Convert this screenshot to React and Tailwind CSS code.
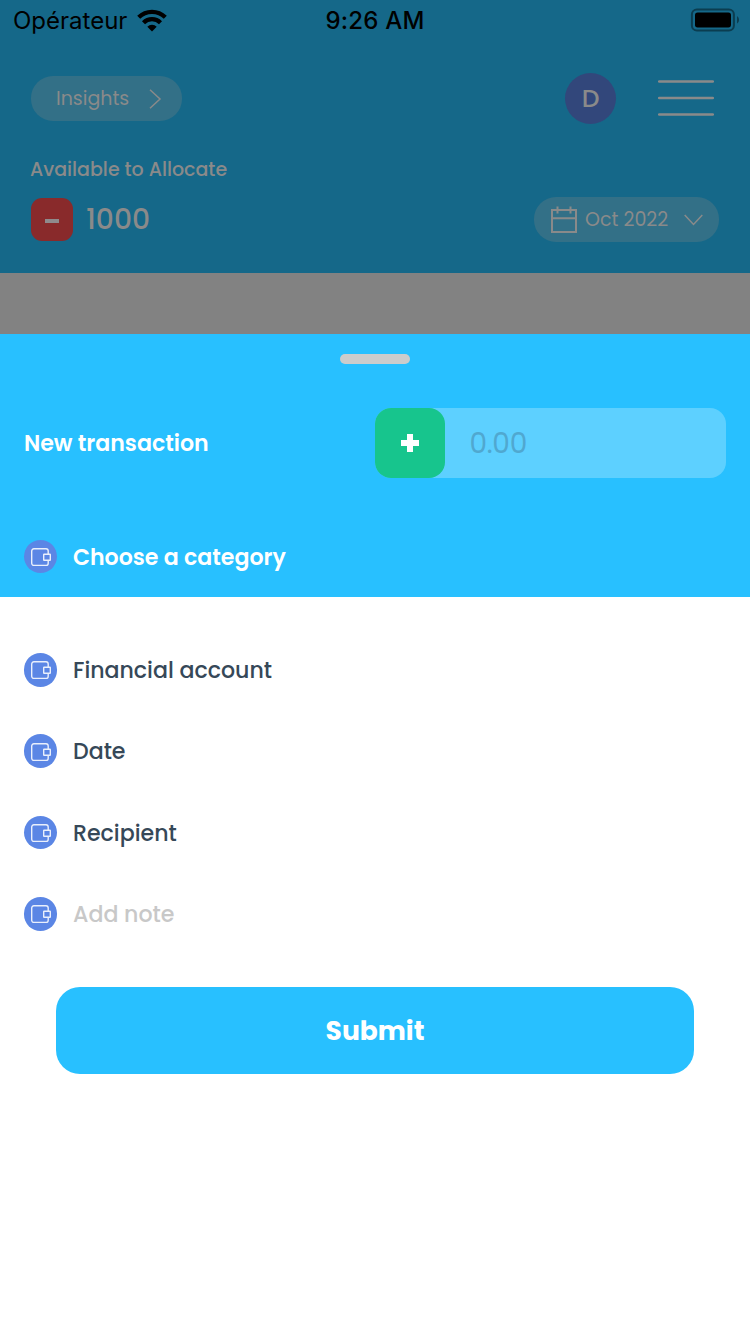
import React from "react";

function WalletIcon() {
  return (
    <span className="flex h-[33.5px] w-[33px] shrink-0 items-center justify-center rounded-full bg-[#5b86e5]">
      <svg width="33" height="33" viewBox="0 0 33 33" fill="none" stroke="#e9effc" strokeWidth="1.4">
        <path d="M24.2 14V11a2.2 2.2 0 0 0-2.2-2.2H9.9A2.2 2.2 0 0 0 7.7 11v12.2a2.2 2.2 0 0 0 2.2 2.2h12.1a2.2 2.2 0 0 0 2.2-2.2v-2.4" />
        <rect x="19.7" y="14.2" width="6.6" height="6.1" rx="0.4" />
      </svg>
    </span>
  );
}

function StatusBar() {
  return (
    <div className="grid h-10 grid-cols-3 items-center font-[Inter,sans-serif] text-[24px] leading-[40px] text-black">
      <div className="flex items-center gap-[9.5px] pl-[13px]">
        <span className="pt-[2px] leading-[38px]">Opérateur</span>
        <svg width="30" height="23" viewBox="0 0 30 23">
          <path d="M15 22.5l4.7-4.8a6.6 6.6 0 0 0-9.4 0z" fill="#000" />
          <path d="M6.5 13.7a12 12 0 0 1 17 0M1.7 8.3a19 19 0 0 1 26.6 0" fill="none" stroke="#000" strokeWidth="4.3" />
        </svg>
      </div>
      <div className="pt-[2px] text-center font-medium leading-[38px] tracking-[0.2px]">9:26 AM</div>
      <div className="flex justify-end pr-[11px]">
        <svg width="49" height="24" viewBox="0 0 49 24">
          <rect x="1.9" y="1.4" width="42" height="21" rx="5" fill="none" stroke="#0b3d50" strokeWidth="2" />
          <rect x="5" y="4.4" width="36" height="15" rx="2.6" fill="#000" />
          <path d="M47 8.2c1.4.6 2 2 2 3.6s-.6 3-2 3.6z" fill="#0b3d50" />
        </svg>
      </div>
    </div>
  );
}

function Header() {
  return (
    <header className="h-[273px] bg-[#156889] text-[#8a8a8a]">
      <StatusBar />
      <div className="flex items-center pl-[31px] pr-9 pt-[33px]">
        <button className="flex h-[45px] w-[151px] items-center rounded-[22px] bg-[#337087] pl-[25px] text-[19px]">
          <span className="w-[93px] pt-[2px] text-left">Insights</span>
          <svg width="13" height="20" viewBox="0 0 13 20" fill="none" stroke="currentColor" strokeWidth="1.5">
            <path d="M1 .8l10 9.2L1 19.2" />
          </svg>
        </button>
        <div className="ml-auto flex h-[51px] w-[51px] items-center justify-center rounded-full bg-[#32477b] text-[25px] font-medium">D</div>
        <svg className="mb-[2px] ml-[42px]" width="56" height="38" viewBox="0 0 56 38" fill="none" stroke="currentColor" strokeWidth="2.5" strokeLinecap="round">
          <path d="M1.2 2.5h53.6M1.2 19h53.6M1.2 35.5h53.6" />
        </svg>
      </div>
      <div className="pl-[30px] pt-[33px] text-[19px] font-medium leading-[25px]">Available to Allocate</div>
      <div className="flex items-center pl-[31px] pr-[31px] pt-[15px]">
        <div className="flex h-[43px] w-[42px] items-center justify-center rounded-[11px] bg-[#892a2b]">
          <span className="mt-[3px] h-[4px] w-[14px] bg-[#8f8a8c]" />
        </div>
        <div className="ml-[13px] text-[28.2px] font-medium leading-[43px]">1000</div>
        <button className="ml-auto flex h-[45px] w-[185px] items-center rounded-[22px] bg-[#337087] pl-[17px] text-[19px]">
          <svg width="26" height="27" viewBox="0 0 26 27" fill="none" stroke="currentColor" strokeWidth="2">
            <path d="M1 4h24v22H1zM1 12.2h24M6.5 .5v7M19.5 .5v7" />
          </svg>
          <span className="ml-2 w-[99px] pt-[2px] text-left">Oct 2022</span>
          <svg width="19" height="12" viewBox="0 0 19 12" fill="none" stroke="currentColor" strokeWidth="1.5">
            <path d="M.7 1l8.8 9.5L18.3 1" />
          </svg>
        </button>
      </div>
    </header>
  );
}

function Row({ label, className }) {
  return (
    <div className="flex h-[81.4px] items-center gap-4">
      <WalletIcon />
      <span className={className}>{label}</span>
    </div>
  );
}

export default function App() {
  return (
    <div className="flex h-[1334px] w-[750px] flex-col overflow-hidden bg-[#828282] font-[Poppins,Inter,sans-serif]">
      <Header />
      <main className="mt-[61px] flex-1 bg-white">
        <section className="h-[263px] bg-[#28c0ff] px-6 pt-5 text-white">
          <div className="mx-auto h-[10px] w-[70px] rounded-full bg-[#ccc]" />
          <div className="mt-11 flex h-[70px] items-center justify-between">
            <h1 className="pt-[2px] text-[22.1px] font-semibold">New transaction</h1>
            <div className="flex h-[70px] w-[351px] items-center rounded-[16px] bg-[#5dd0ff]">
              <button className="flex h-[70px] w-[70px] items-center justify-center rounded-[16px] bg-[#17c58d]">
                <svg width="18" height="18" viewBox="0 0 18 18" fill="#fff">
                  <path d="M6 0h6v6h6v6h-6v6H6v-6H0V6h6z" />
                </svg>
              </button>
              <span className="ml-[24.5px] pt-[2px] text-[28px] tracking-[-0.3px] text-[#50a8d0]">0.00</span>
            </div>
          </div>
          <div className="mt-[61.7px] flex items-center gap-4">
            <WalletIcon />
            <span className="pt-[2px] text-[22.1px] font-semibold leading-[31px]">Choose a category</span>
          </div>
        </section>
        <section className="px-6 pt-[32.1px] text-[22.1px] font-medium text-[#364858]">
          <Row label="Financial account" className="pt-px" />
          <Row label="Date" className="pt-px" />
          <Row label="Recipient" className="pt-[2px]" />
          <Row label="Add note" className="pt-px text-[#c8c8c8]" />
        </section>
        <div className="px-14 pt-[31.9px]">
          <button className="h-[87px] w-full rounded-[24px] bg-[#28c0ff] pt-[2px] text-[26.5px] font-bold text-white">Submit</button>
        </div>
      </main>
    </div>
  );
}
